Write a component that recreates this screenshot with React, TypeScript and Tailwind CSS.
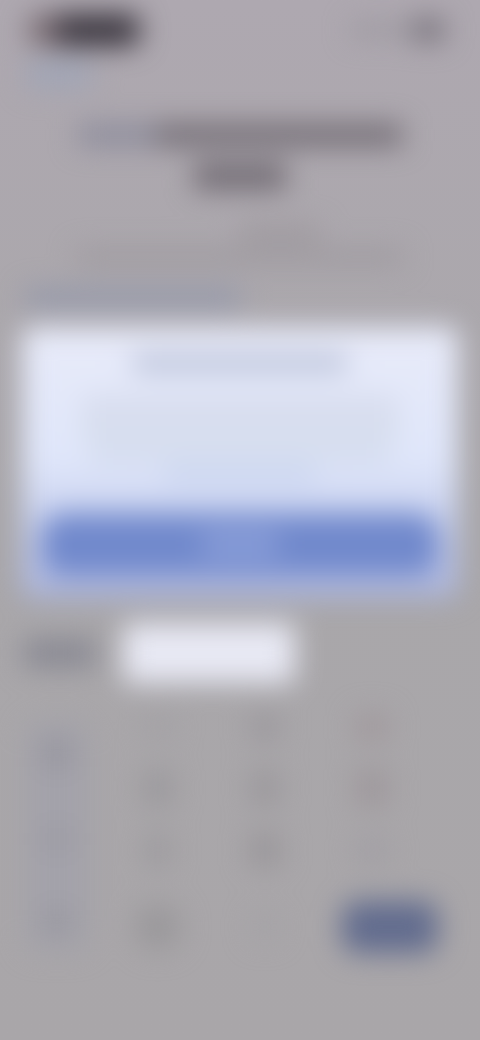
import React from "react";

function Bar({ className }: { className: string }) {
  return <div className={className} />;
}

function Key({ className }: { className: string }) {
  return (
    <div className="flex items-center justify-center">
      <Bar className={`rounded-[4px] ${className}`} />
    </div>
  );
}

export default function App() {
  return (
    <div className="w-[480px] h-[1040px] overflow-hidden bg-gradient-to-b from-[#aea8b0] via-[#a9a7aa] to-[#a9a6a9]">
      <div className="flex flex-col h-[1040px] blur-[14px]">
        <div className="flex items-center justify-between h-[60px] pl-[28px] pr-[36px] shrink-0">
          <div className="flex items-center">
            <Bar className="w-[30px] h-[32px] rounded-l-[12px] bg-[#7a6d74]" />
            <Bar className="w-[82px] h-[32px] rounded-r-[12px] bg-[#3a353e]" />
          </div>
          <div className="flex items-center gap-[6px]">
            <Bar className="w-[24px] h-[14px] bg-[#98959c]" />
            <Bar className="w-[24px] h-[14px] bg-[#98959c]" />
            <Bar className="w-[32px] h-[22px] rounded-[4px] bg-[#76717a]" />
          </div>
        </div>

        <Bar className="ml-[26px] w-[66px] h-[28px] rounded-[3px] bg-[#a0a5b6] shrink-0" />

        <div className="mt-[37px] flex flex-col items-center shrink-0">
          <div className="flex w-[324px] h-[20px]">
            <Bar className="w-[78px] h-full bg-[#8a8a9a]" />
            <Bar className="w-[246px] h-full bg-[#6e6870]" />
          </div>
          <Bar className="mt-[18px] w-[92px] h-[26px] bg-[#706a72]" />
        </div>

        <div className="mt-[37px] flex flex-col items-center shrink-0">
          <Bar className="ml-[80px] w-[80px] h-[14px] bg-[#9b969b]" />
          <Bar className="mt-[10px] w-[326px] h-[14px] bg-[#9c989d]" />
        </div>

        <Bar className="ml-[26px] mt-[26px] w-[214px] h-[16px] bg-[#9096aa] shrink-0" />

        <div className="mx-[22px] mt-[21px] h-[270px] flex flex-col items-center rounded-[10px] bg-gradient-to-b from-[#e8ebf9] via-[#dfe6fa] to-[#aab4dd] shrink-0">
          <Bar className="mt-[28px] w-[214px] h-[16px] bg-[#b4bcd3]" />
          <Bar className="mt-[26px] w-[316px] h-[16px] bg-[#d4d9ea]" />
          <Bar className="mt-[8px] w-[316px] h-[16px] bg-[#d2d9e8]" />
          <Bar className="mt-[8px] w-[300px] h-[16px] bg-[#d2daeb]" />
          <Bar className="mt-[6px] w-[150px] h-[14px] bg-[#c8d4ee]" />
          <div className="mt-[32px] w-[396px] h-[62px] rounded-[22px] bg-[#7189cc] flex items-center justify-center">
            <Bar className="w-[76px] h-[24px] bg-[#8ca0da]" />
          </div>
        </div>

        <div className="flex items-center mt-[26px] pl-[24px] shrink-0">
          <Bar className="w-[72px] h-[28px] bg-[#888892]" />
          <Bar className="ml-[27px] w-[172px] h-[60px] rounded-[4px] bg-[#e8e9f4]" />
        </div>

        <div className="flex mt-[11px] pl-[26px] shrink-0">
          <div className="mt-[29px] w-[62px] h-[227px] rounded-[12px] bg-[#a3a2aa] flex flex-col items-center justify-between py-[16px]">
            <Bar className="w-[28px] h-[28px] bg-[#96959e]" />
            <Bar className="w-[28px] h-[20px] bg-[#9a99a2]" />
            <Bar className="w-[28px] h-[24px] bg-[#98979f]" />
          </div>
          <div className="ml-[16px] grid grid-cols-[107px_107px_107px] grid-rows-[66px_56px_68px_86px]">
            <Key className="w-[30px] h-[24px] bg-[#a3a1a5]" />
            <Key className="w-[28px] h-[26px] bg-[#9a979c]" />
            <Key className="w-[32px] h-[26px] bg-[#a0989c]" />
            <Key className="w-[30px] h-[36px] bg-[#9b999d]" />
            <Key className="w-[28px] h-[36px] bg-[#9b989c]" />
            <Key className="w-[32px] h-[38px] bg-[#9e989c]" />
            <Key className="w-[22px] h-[32px] bg-[#9b999d]" />
            <Key className="w-[30px] h-[32px] bg-[#989599]" />
            <Key className="w-[30px] h-[24px] bg-[#a19ea4]" />
            <div className="flex items-center justify-center">
              <Bar className="w-[46px] h-[46px] rounded-full bg-[#9a989b]" />
            </div>
            <Key className="w-[24px] h-[24px] bg-[#a4a2a6]" />
            <div className="flex items-center">
              <Bar className="shrink-0 ml-[24px] w-[96px] h-[52px] rounded-[16px] bg-[#626c8e]" />
            </div>
          </div>
        </div>
      </div>
    </div>
  );
}
